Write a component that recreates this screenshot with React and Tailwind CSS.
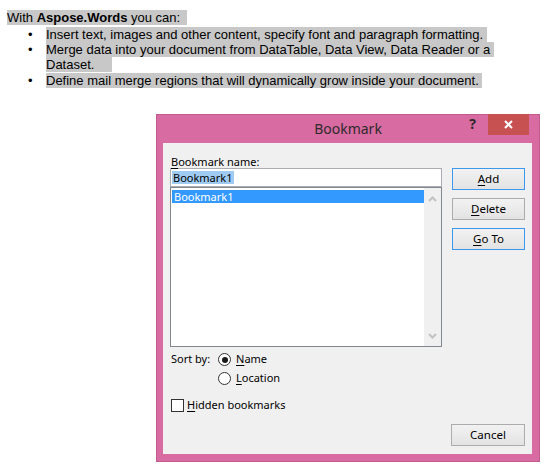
import React from "react";

const ui = { fontFamily: '"Noto Sans", "Open Sans", sans-serif' };

function Btn({ children, focused, className = "" }) {
  return (
    <div
      className={
        "h-[22px] w-[73px] flex items-center justify-center border bg-gradient-to-b from-[#f2f2f2] to-[#e3e3e3] text-[11.5px] text-black " +
        (focused ? "border-[#3d97ea]" : "border-[#acacac]") +
        " " +
        className
      }
    >
      {children}
    </div>
  );
}

function Key({ children }) {
  return <span className="underline underline-offset-[2px] decoration-1">{children}</span>;
}

function Radio({ checked }) {
  return (
    <div className="w-[13px] h-[13px] rounded-full border border-[#333] bg-white flex items-center justify-center">
      {checked && <div className="w-[6px] h-[6px] rounded-full bg-[#1a1a1a]" />}
    </div>
  );
}

export default function App() {
  return (
    <div className="w-[554px] h-[472px] bg-white overflow-hidden">
      {/* document text */}
      <div
        className="pt-[10px] pl-[7px] text-[13px] leading-[15px] text-black"
        style={{ fontFamily: '"Liberation Sans", Arial, sans-serif' }}
      >
        <div>
          <span className="bg-[#c8c8c8]">
            With <b>Aspose.Words</b> you can:&nbsp;&nbsp;
          </span>
        </div>
        <div className="mt-[2px]">
          <div className="flex">
            <span className="ml-[21px] w-[18px]">•</span>
            <span className="bg-[#c8c8c8]">
              Insert text, images and other content, specify font and paragraph formatting.&nbsp;
            </span>
          </div>
          <div className="flex">
            <span className="ml-[21px] w-[18px]">•</span>
            <div>
              <span className="bg-[#c8c8c8]">
                Merge data into your document from DataTable, Data View, Data Reader or a&nbsp;
              </span>
              <br />
              <span className="bg-[#c8c8c8]">Dataset.&nbsp;&nbsp;&nbsp;&nbsp;&nbsp;</span>
            </div>
          </div>
          <div className="flex mt-[1px]">
            <span className="ml-[21px] w-[18px]">•</span>
            <span className="bg-[#c8c8c8]">
              Define mail merge regions that will dynamically grow inside your document.&nbsp;
            </span>
          </div>
        </div>
      </div>

      {/* Bookmark dialog */}
      <div
        className="mt-[26px] ml-[156px] w-[384px] h-[348px] bg-[#d86ba1] border border-[#c25b8d]"
        style={ui}
      >
        <div className="relative h-[28px] flex items-center justify-center">
          <span className="text-[14px] text-[#2e2a2c] leading-none">Bookmark</span>
          <div className="absolute right-[10px] top-[-1px] flex items-start">
            <span className="mr-[12px] mt-[3px] text-[14px] font-bold text-[#2e2a2c] leading-[14px]">?</span>
            <div className="w-[41px] h-[21px] bg-[#c75050] flex items-center justify-center">
              <svg width="9" height="9" viewBox="0 0 9 9">
                <path d="M1 1L8 8M8 1L1 8" stroke="white" strokeWidth="2" />
              </svg>
            </div>
          </div>
        </div>

        <div className="ml-[6px] w-[369px] h-[311px] bg-[#f0f0f0] pt-[12px] pl-[7px] pr-[7px] text-[11px] text-black">
          <div className="flex">
            <div className="w-[272px]">
              <div className="h-[13px] leading-[13px] pl-[1px]">
                <Key>B</Key>ookmark name:
              </div>
              <div className="h-[19px] border border-[#abadb3] bg-white flex items-center pl-[1px]">
                <span className="bg-[#9fcbf2] px-[1px] leading-[13px]">Bookmark1</span>
              </div>
              <div className="h-[160px] border border-[#828790] bg-white flex">
                <div className="flex-1 pt-[2px] pl-[1px]">
                  <div className="h-[13px] leading-[13px] bg-[#3399ff] text-white px-[2px]">Bookmark1</div>
                </div>
                <div className="w-[17px] bg-[#f0f0f0] flex flex-col items-center justify-between pt-[8px] pb-[7px]">
                  <svg width="9" height="6" viewBox="0 0 9 6">
                    <path d="M1 5L4.5 1.5L8 5" stroke="#c2c2c2" strokeWidth="2" fill="none" />
                  </svg>
                  <svg width="9" height="6" viewBox="0 0 9 6">
                    <path d="M1 1L4.5 4.5L8 1" stroke="#c2c2c2" strokeWidth="2" fill="none" />
                  </svg>
                </div>
              </div>
            </div>
            <div className="ml-[10px] mt-[13px] flex flex-col gap-[8px]">
              <Btn focused>
                <Key>A</Key>dd
              </Btn>
              <Btn>
                <Key>D</Key>elete
              </Btn>
              <Btn focused>
                <Key>G</Key>o To
              </Btn>
            </div>
          </div>

          <div className="mt-[3px] pl-[1px]">
            <div className="flex items-center h-[19px]">
              <span className="w-[47px]">Sort by:</span>
              <Radio checked />
              <span className="ml-[5px]">
                <Key>N</Key>ame
              </span>
            </div>
            <div className="flex items-center h-[19px] pl-[47px]">
              <Radio />
              <span className="ml-[5px]">
                <Key>L</Key>ocation
              </span>
            </div>
            <div className="flex items-center h-[19px] mt-[8px]">
              <div className="w-[13px] h-[13px] border border-[#333] bg-white" />
              <span className="ml-[3px]">
                <Key>H</Key>idden bookmarks
              </span>
            </div>
          </div>

          <div className="flex justify-end mt-[9px]">
            <Btn className="w-[74px]">Cancel</Btn>
          </div>
        </div>
      </div>
    </div>
  );
}
